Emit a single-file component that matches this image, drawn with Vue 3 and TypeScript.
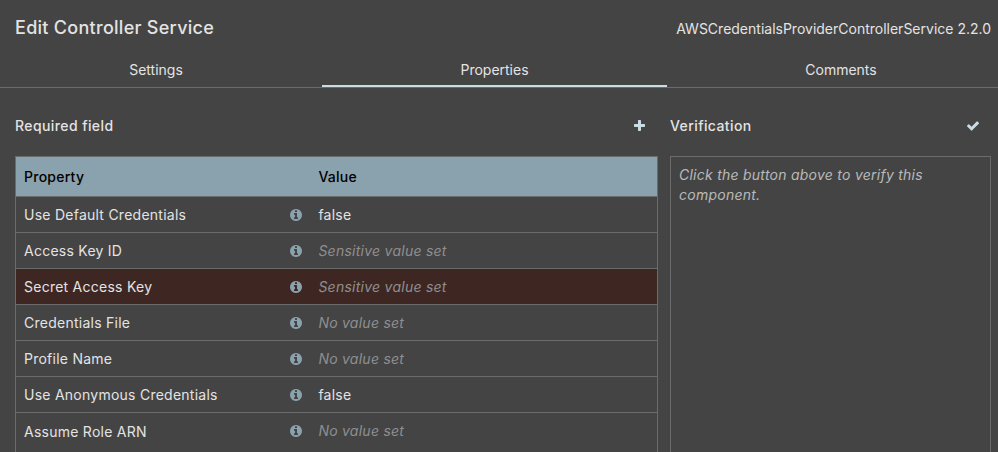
<script setup lang="ts">
interface Property {
  name: string
  value: string
  unset?: boolean
  edited?: boolean
  tall?: boolean
}

const tabs: string[] = ['Settings', 'Properties', 'Comments']
const activeTab = 'Properties'

const properties: Property[] = [
  { name: 'Use Default Credentials', value: 'false' },
  { name: 'Access Key ID', value: 'Sensitive value set', unset: true },
  { name: 'Secret Access Key', value: 'Sensitive value set', unset: true, edited: true },
  { name: 'Credentials File', value: 'No value set', unset: true },
  { name: 'Profile Name', value: 'No value set', unset: true },
  { name: 'Use Anonymous Credentials', value: 'false' },
  { name: 'Assume Role ARN', value: 'No value set', unset: true, tall: true },
]
</script>

<template>
  <main class="dialog">
    <header class="title-bar">
      <h2 class="title">Edit Controller Service</h2>
      <span class="type">AWSCredentialsProviderControllerService 2.2.0</span>
    </header>

    <nav class="tabs">
      <button v-for="tab in tabs" :key="tab" class="tab" :class="{ active: tab === activeTab }">
        {{ tab }}
      </button>
    </nav>

    <div class="content">
      <section class="properties">
        <div class="section-head">
          <h3>Required field</h3>
          <button class="icon-button add" aria-label="Add">
            <svg width="11" height="11" viewBox="0 0 11 11">
              <path d="M4.7 0h1.6q.7 0 .7.7V4h3.3q.7 0 .7.7v1.6q0 .7-.7.7H7v3.3q0 .7-.7.7H4.700q-.7 0-.7-.7V7H.7Q0 7 0 6.300V4.700Q0 4 .7 4H4V.7Q4 0 4.700 0z" />
            </svg>
          </button>
        </div>
        <div class="table">
          <div class="row head">
            <div class="name">Property</div>
            <div class="value">Value</div>
          </div>
          <div
            v-for="p in properties"
            :key="p.name"
            class="row"
            :class="{ edited: p.edited, tall: p.tall }"
          >
            <div class="name">
              <span class="label">{{ p.name }}</span>
              <svg class="info" width="12" height="12" viewBox="0 0 1536 1536">
                <path d="M1024 1248v-160q0-14-9-23t-23-9h-96V544q0-14-9-23t-23-9H544q-14 0-23 9t-9 23v160q0 14 9 23t23 9h96v320h-96q-14 0-23 9t-9 23v160q0 14 9 23t23 9h448q14 0 23-9t9-23zM896 352V192q0-14-9-23t-23-9H672q-14 0-23 9t-9 23v160q0 14 9 23t23 9h192q14 0 23-9t9-23zm640 416q0 209-103 385.500T1153.500 1433 768 1536t-385.500-103T103 1153.500 0 768t103-385.500T382.500 103 768 0t385.500 103T1433 382.500 1536 768z" />
              </svg>
            </div>
            <div class="value" :class="{ unset: p.unset }">{{ p.value }}</div>
          </div>
        </div>
      </section>

      <section class="verification">
        <div class="section-head">
          <h3>Verification</h3>
          <button class="icon-button verify" aria-label="Verify">
            <svg width="12" height="10" viewBox="121 334 1550 1188">
              <path d="M1671 566q0 40-28 68l-724 724-136 136q-28 28-68 28t-68-28l-136-136-362-362q-28-28-28-68t28-68l136-136q28-28 68-28t68 28l294 295 656-657q28-28 68-28t68 28l136 136q28 28 28 68z" />
            </svg>
          </button>
        </div>
        <div class="result">Click the button above to verify this component.</div>
      </section>
    </div>
  </main>
</template>

<style>
body {
  margin: 0;
  background: #444444;
  overflow: hidden;
}
</style>

<style scoped>
.dialog {
  box-sizing: border-box;
  width: 998px;
  height: 452px;
  overflow: hidden;
  display: flex;
  flex-direction: column;
  background: #444444;
  color: #e3e3e3;
  font: 400 14px/20px Inter, sans-serif;
}

h2,
h3 {
  margin: 0;
  font-weight: 500;
}

button {
  border: 0;
  padding: 0;
  background: none;
  color: inherit;
  font: inherit;
}

.title-bar {
  display: flex;
  justify-content: space-between;
  height: 52px;
  padding: 0 7px 0 15px;
}

.title {
  padding-top: 16px;
  font-size: 18px;
  line-height: 24px;
  letter-spacing: 0.28px;
}

.type {
  padding-top: 19px;
}

.tabs {
  display: grid;
  grid-template-columns: 322px 345px 331px;
  height: 35px;
  border-bottom: 1px solid #6b6b6b;
}

.tab {
  box-sizing: border-box;
  border-bottom: 2px solid transparent;
  padding-top: 3px;
}

.tab:first-child {
  padding-right: 10px;
}

.tab:last-child {
  padding-left: 17px;
}

.tab.active {
  border-bottom-color: #cbdde4;
}

.content {
  flex: 1;
  display: grid;
  grid-template-columns: 643px 321px;
  gap: 12px;
  padding: 28px 7px 0 15px;
  min-height: 0;
}

.section-head {
  display: flex;
  justify-content: space-between;
  align-items: center;
  height: 20px;
  margin-bottom: 20px;
}

.section-head h3 {
  font-size: 14px;
  line-height: 20px;
  letter-spacing: 0.41px;
}

.icon-button {
  display: flex;
  fill: #cbdde4;
}

.add {
  padding: 0 13px 1px 0;
}

.verify {
  padding-right: 12px;
}

.table {
  border: 1px solid #6b6b6b;
  letter-spacing: 0.25px;
}

.row {
  box-sizing: border-box;
  display: grid;
  grid-template-columns: 294px 1fr;
  height: 36px;
  border-bottom: 1px solid #6b6b6b;
}

.row > div {
  display: flex;
  align-items: center;
  padding-left: 8px;
}

.row > .value {
  padding-left: 8.4px;
}

.row.head {
  height: 40px;
  background: #8aa2ae;
  color: #000;
  font-weight: 500;
}

.row.edited {
  background: #3e2723;
}

.row.tall {
  height: 60px;
}

.row.tall > div {
  align-items: flex-start;
  padding-top: 8px;
}

.row.tall .label {
  padding-top: 1px;
}

.row.tall .info {
  margin-top: 4px;
}

.name {
  justify-content: space-between;
  padding-right: 8px;
}

.info {
  fill: #8aa2ae;
}

.unset {
  color: #8f8f8f;
  font-style: italic;
}

.result {
  box-sizing: border-box;
  height: 330px;
  border: 1px solid #6b6b6b;
  padding: 8px;
  color: #bababa;
  font-style: italic;
  letter-spacing: 0.25px;
}
</style>
